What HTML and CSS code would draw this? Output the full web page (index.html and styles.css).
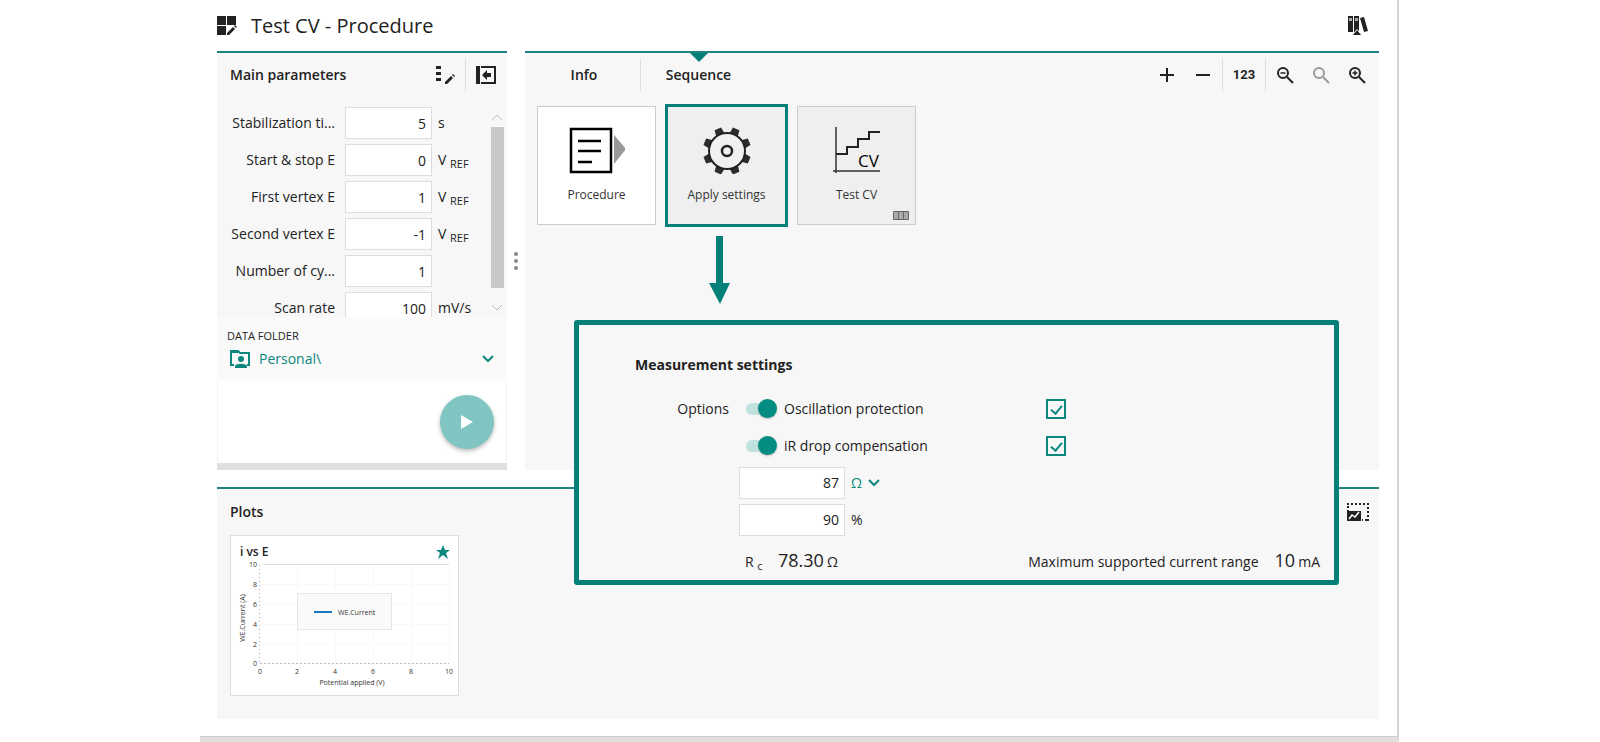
FILE: index.html
```html
<!DOCTYPE html>
<html lang="en">
<head>
 <meta charset="UTF-8">
 <meta name="viewport" content="width=device-width,initial-scale=1.0">
 <title>Test CV - Procedure</title>
 <link rel="stylesheet" href="styles.css">
</head>
<body>
<div class="app">
 <header class="app-header">
  <svg class="icon" width="20" height="20" viewBox="0 0 20 20"><path fill="#222" d="M0 0h9v9H0zM10 0h9v9h-9zM0 10h9v9H0zM10 17l6-6 2 2-6 6h-2zM17 10l1-1 2 2-1 1z"/></svg>
  <h1>Test CV - Procedure</h1>
  <button type="button" class="icon-button library" aria-label="Library">
   <svg width="20" height="20" viewBox="0 0 20 20"><path fill="#222" d="M0 0h5v16H0zM6 0h5v16H6zM12 2l4-1 4 14-4 1z"/><path fill="#aaa" d="M1 2h3v3H1zM7 2h3v3H7z"/><path fill="#222" stroke="#fff" d="M4 19.500l5-6 5 6z"/></svg>
  </button>
 </header>

 <div class="workspace">
  <section class="panel parameters">
   <div class="panel-head">
    <h2>Main parameters</h2>
    <button type="button" class="icon-button" aria-label="Edit parameters">
     <svg width="20" height="20" viewBox="0 0 20 20"><path fill="#222" d="M1 1h5v3H1zM1 7h5v3H1zM1 13h5v3H1zM10 17l6-6 2 2-6 6h-2zM17 10l1-1 2 2-1 1z"/></svg>
    </button>
    <span class="divider"></span>
    <button type="button" class="icon-button" aria-label="Collapse panel">
     <svg width="20" height="20" viewBox="0 0 20 20"><path fill="#222" d="M0 1h4v18H0zM6 10l5-5v3h4v4h-4v3z"/><path fill="none" stroke="#222" stroke-width="2" d="M5 2h14v16H5"/></svg>
    </button>
   </div>
   <div class="param-scroll">
    <div class="param-list">
     <div class="param"><label for="p1">Stabilization ti...</label><input id="p1" type="text" value="5"><span>s</span></div>
     <div class="param"><label for="p2">Start &amp; stop E</label><input id="p2" type="text" value="0"><span>V <sub>REF</sub></span></div>
     <div class="param"><label for="p3">First vertex E</label><input id="p3" type="text" value="1"><span>V <sub>REF</sub></span></div>
     <div class="param"><label for="p4">Second vertex E</label><input id="p4" type="text" value="-1"><span>V <sub>REF</sub></span></div>
     <div class="param"><label for="p5">Number of cy...</label><input id="p5" type="text" value="1"><span></span></div>
     <div class="param"><label for="p6">Scan rate</label><input id="p6" type="text" value="100"><span>mV/s</span></div>
    </div>
    <div class="scrollbar">
     <svg width="13" height="7" viewBox="0 0 13 7"><path fill="none" stroke="#bbb" d="M1 6l5-5 5 5"/></svg>
     <div class="thumb"></div>
     <svg width="13" height="7" viewBox="0 0 13 7"><path fill="none" stroke="#bbb" d="M1 1l5 5 5-5"/></svg>
    </div>
   </div>
   <div class="data-folder">
    <label for="folder">DATA FOLDER</label>
    <div class="folder-row">
     <svg width="20" height="20" viewBox="0 0 20 20"><path fill="none" stroke="#0b877d" stroke-width="2" d="M4 16H1V2h7l2 2h9v12h-2"/><path fill="#0b877d" d="M0 1h8l2 3H0zM5 19v-2c1-3 11-3 12 0v2z"/><circle cx="11" cy="10" r="3" fill="#0b877d"/></svg>
     <select id="folder"><option>Personal\</option></select>
     <svg class="chevron" width="12" height="8" viewBox="0 0 12 8"><path d="M1 1l5 5 5-5"/></svg>
    </div>
   </div>
   <div class="run">
    <button type="button" class="play" aria-label="Run">
     <svg width="12" height="14" viewBox="0 0 12 14"><path fill="#fff" d="M0 0l12 7-12 7z"/></svg>
    </button>
   </div>
  </section>

  <div class="splitter"><i></i><i></i><i></i></div>

  <section class="panel sequence">
   <div class="tabs">
    <button type="button" class="tab">Info</button>
    <span class="divider"></span>
    <button type="button" class="tab active">Sequence</button>
    <div class="tools">
     <button type="button" class="icon-button" aria-label="Add"><svg width="14" height="14" viewBox="0 0 14 14"><path stroke="#222" stroke-width="2" d="M7 0v14M0 7h14"/></svg></button>
     <button type="button" class="icon-button" aria-label="Remove"><svg width="14" height="14" viewBox="0 0 14 14"><path stroke="#222" stroke-width="2" d="M0 7h14"/></svg></button>
     <span class="divider"></span>
     <button type="button" class="icon-button numbers">123</button>
     <span class="divider"></span>
     <button type="button" class="icon-button" aria-label="Zoom out"><svg width="17" height="17" viewBox="0 0 17 17"><g fill="none" stroke="#222" stroke-width="2"><circle cx="6" cy="6" r="5"/><path d="M10 10l6 6"/><path stroke-width="1.500" d="M3.500 6h5"/></g></svg></button>
     <button type="button" class="icon-button" aria-label="Reset zoom"><svg width="17" height="17" viewBox="0 0 17 17"><g fill="none" stroke="#999" stroke-width="2"><circle cx="6" cy="6" r="5"/><path d="M10 10l6 6"/></g></svg></button>
     <button type="button" class="icon-button" aria-label="Zoom in"><svg width="17" height="17" viewBox="0 0 17 17"><g fill="none" stroke="#222" stroke-width="2"><circle cx="6" cy="6" r="5"/><path d="M10 10l6 6"/><path stroke-width="1.500" d="M3.500 6h5M6 3.500v5"/></g></svg></button>
    </div>
   </div>
   <div class="cards">
    <button type="button" class="card first">
     <svg width="56" height="48" viewBox="0 0 56 48"><rect x="2" y="3" width="40" height="43" fill="none" stroke="#000" stroke-width="2.500"/><path stroke="#000" stroke-width="2.500" d="M9 15h23M9 25h23M9 36h14"/><path fill="#999" d="M45 9l12 14-12 15z"/></svg>
     <span>Procedure</span>
    </button>
    <button type="button" class="card selected">
     <svg width="48" height="48" viewBox="-24 -25 48 48">
      <g fill="#2c2c2c">
       <g id="teeth"><path id="tooth" d="M-3.500-24h7l1 7h-9z" transform="rotate(22.500)"/><use href="#tooth" transform="rotate(45)"/></g>
       <use href="#teeth" transform="rotate(90)"/><use href="#teeth" transform="rotate(180)"/><use href="#teeth" transform="rotate(270)"/>
      </g>
      <circle r="18" fill="#f0f0f0" stroke="#222" stroke-width="2"/>
      <circle r="5" fill="none" stroke="#222" stroke-width="2.500"/>
     </svg>
     <span>Apply settings</span>
    </button>
    <button type="button" class="card">
     <svg width="48" height="48" viewBox="0 0 48 48"><path fill="none" stroke="#333" stroke-width="1.500" d="M3 1v46M0 45h47"/><path fill="none" stroke="#222" stroke-width="2" d="M3 28h11v-7h11v-8h11V6h11"/><text x="25" y="41" class="cv-text">CV</text></svg>
     <span>Test CV</span>
     <svg class="cells" width="16" height="9" viewBox="0 0 16 9"><path fill="#aaa" stroke="#666" d="M.5.5h15v8H.5zM5.500.5v8M10.500.5v8"/></svg>
    </button>
   </div>
  </section>
 </div>

 <section class="panel plots">
  <div class="plots-head">
   <h2>Plots</h2>
   <button type="button" class="icon-button" aria-label="Plot layout">
    <svg width="22" height="20" viewBox="0 0 22 20"><path fill="none" stroke="#222" stroke-width="2" stroke-dasharray="2 2" d="M0 2h22M1 4v5M21 5v14M20 18h-5"/><path fill="#222" d="M0 9h14v10H0z"/><path fill="none" stroke="#fff" stroke-width="1.500" d="M2 17l3-4 3 2 4-5"/></svg>
   </button>
  </div>
  <div class="plot">
   <div class="plot-title">
    <h3>i vs E</h3>
    <svg width="14" height="14" viewBox="0 0 14 14"><path fill="#0b877d" d="M7 0l2 5h5l-4 3 2 6-5-4-5 4 2-6-4-3h5z"/></svg>
   </div>
   <svg class="chart" viewBox="0 0 227 134">
    <path stroke="#f9f9f9" d="M66.500 4v99M104.500 4v99M142.500 4v99M180.500 4v99M218.500 4v99M29 23.500h189M29 43.500h189M29 63.500h189M29 83.500h189"/>
    <path stroke="#ddd" d="M32 3.500h186"/>
    <path stroke="#bbb" stroke-dasharray="2 2" d="M29 102.500h189"/>
    <path stroke="#aaa" stroke-dasharray="1 3" d="M28.500 4v99"/>
    <g class="y-ticks"><text x="26" y="6">10</text><text x="26" y="26">8</text><text x="26" y="46">6</text><text x="26" y="66">4</text><text x="26" y="86">2</text><text x="26" y="105">0</text></g>
    <g class="x-ticks"><text x="29" y="113">0</text><text x="66" y="113">2</text><text x="104" y="113">4</text><text x="142" y="113">6</text><text x="180" y="113">8</text><text x="218" y="113">10</text></g>
    <text class="axis" x="121" y="124">Potential applied (V)</text>
    <text class="axis" transform="translate(14 57) rotate(-90)">WE.Current (A)</text>
    <rect x="66.500" y="32.500" width="94" height="36" fill="#fafafa" stroke="#e6e6e6"/>
    <path stroke="#1a78be" stroke-width="2" d="M83 51h18"/>
    <text class="legend" x="107" y="54">WE.Current</text>
   </svg>
  </div>
 </section>

 <svg class="callout-arrow" width="22" height="68" viewBox="0 0 22 68"><path fill="#048078" d="M7 0h7v47h7L11 68 0 47h7z"/></svg>

 <section class="settings">
  <h2>Measurement settings</h2>
  <div class="option">
   <span class="option-name">Options</span>
   <input type="checkbox" class="switch" id="osc" checked>
   <label for="osc">Oscillation protection</label>
   <input type="checkbox" class="tick" aria-label="Show oscillation protection" checked>
  </div>
  <div class="option">
   <span class="option-name"></span>
   <input type="checkbox" class="switch" id="ir" checked>
   <label for="ir">iR drop compensation</label>
   <input type="checkbox" class="tick" aria-label="Show iR drop compensation" checked>
  </div>
  <div class="value-row">
   <input type="text" value="87" aria-label="Resistance">
   <select class="unit" aria-label="Unit"><option>Ω</option></select>
   <svg class="chevron" width="12" height="8" viewBox="0 0 12 8"><path d="M1 1l5 5 5-5"/></svg>
  </div>
  <div class="value-row">
   <input type="text" value="90" id="percent" aria-label="Compensation">
   <label for="percent">%</label>
  </div>
  <div class="results">
   <span class="rc">R <sub>c</sub></span>
   <span class="number">78.30</span><span>Ω</span>
   <span class="max">Maximum supported current range</span>
   <span class="number">10</span><span>mA</span>
  </div>
 </section>
</div>
</body>
</html>
```

FILE: styles.css
```css
*{
  box-sizing: border-box;
}
body{
  margin: 0;
  background: #fff;
  color: #222;
  font-family: "Open Sans", "Noto Sans", sans-serif;
  font-size: 14px;
  line-height: 20px;
}
h1, h2, h3{
  margin: 0;
}
h1{
  font-size: 20px;
  font-weight: 400;
  line-height: 28px;
}
h2{
  font-size: 14px;
  font-weight: 600;
}
h3{
  font-size: 12px;
  font-weight: 600;
}
button, input, select{
  font: inherit;
  color: inherit;
}
button, select{
  padding: 0;
  border: 0;
  background: none;
}
svg{
  display: block;
  flex: none;
}
select{
  appearance: none;
  color: #0b877d;
}
input[type=text]{
  height: 32px;
  padding: 0 5px;
  border: 1px solid #ddd;
  background: #fff;
  text-align: right;
}
sub{
  font-size: 11px;
  line-height: 0;
  vertical-align: -3px;
}
.chevron path{
  fill: none;
  stroke: #0b877d;
  stroke-width: 2;
}
.app{
  position: relative;
  min-height: 100vh;
  margin: 0 201px 0 200px;
  padding: 0 18px 17px 17px;
  border-right: 2px solid #d5d5d5;
  border-bottom: 5px solid #e0e0e0;
  box-shadow: inset 0 -1px #ccc;
}
.app-header{
  display: flex;
  align-items: center;
  gap: 14px;
  height: 51px;
  padding-right: 11px;
}
.library{
  margin-left: auto;
}
.icon-button{
  display: flex;
  align-items: center;
  justify-content: center;
}
.divider{
  width: 1px;
  height: 32px;
  background: #ddd;
}
.workspace{
  display: grid;
  grid-template-columns: 290px 18px 1fr;
}
.panel{
  border-top: 2px solid #1d857e;
  background: #f7f7f7;
}

/* left column */
.parameters{
  border-bottom: 7px solid #e0e0e0;
}
.panel-head{
  display: flex;
  align-items: center;
  gap: 10px;
  height: 44px;
  padding: 0 11px 0 13px;
}
.panel-head h2{
  flex: 1;
}
.param-scroll{
  display: flex;
  justify-content: space-between;
  height: 220px;
  padding: 10px 3px 0 0;
  overflow: hidden;
}
.param-list{
  display: grid;
  gap: 5px;
  align-content: start;
}
.param{
  display: grid;
  grid-template-columns: 128px 87px auto;
  align-items: center;
  height: 32px;
}
.param label{
  padding-right: 10px;
  text-align: right;
  white-space: nowrap;
}
.param input{
  width: 87px;
}
.param span{
  padding-left: 6px;
}
.scrollbar{
  display: flex;
  flex-direction: column;
  align-items: center;
  gap: 6px;
  width: 13px;
  padding: 7px 0 6px;
}
.scrollbar .thumb{
  flex: 1;
  width: 13px;
  margin-bottom: 10px;
  background: #c8c8c8;
}
.data-folder{
  height: 64px;
  padding: 9px 10px 0;
  background: #fafafa;
}
.data-folder label{
  display: block;
  font-size: 11px;
}
.folder-row{
  display: flex;
  align-items: center;
  gap: 9px;
  padding: 3px 3px 0;
}
.folder-row select{
  flex: 1;
}
.run{
  display: flex;
  justify-content: flex-end;
  align-items: center;
  height: 82px;
  padding-right: 12px;
  border: solid #f3f3f3;
  border-width: 0 1px;
  background: #fff;
}
.play{
  display: flex;
  align-items: center;
  justify-content: center;
  width: 54px;
  height: 54px;
  border-radius: 50%;
  background: #80c5c2;
  box-shadow: 0 2px 4px #bbb;
}
.splitter{
  display: flex;
  flex-direction: column;
  align-items: center;
  justify-content: center;
  gap: 3px;
}
.splitter i{
  width: 4px;
  height: 4px;
  border-radius: 50%;
  background: #888;
}

/* sequence */
.tabs{
  display: flex;
  align-items: center;
  height: 44px;
}
.tab{
  position: relative;
  width: 115px;
  height: 44px;
  font-weight: 600;
}
.tab.active::before{
  content: "";
  position: absolute;
  top: 0;
  left: 50%;
  margin-left: -9px;
  border: 9px solid transparent;
  border-top-color: #048078;
  border-bottom: 0;
}
.tab:first-child{
  padding-left: 3px;
}
.tools{
  display: flex;
  align-items: center;
  margin-left: auto;
  padding-right: 4px;
}
.tools .icon-button{
  width: 36px;
  height: 32px;
}
.tools .divider{
  margin: 0 1px;
}
.tools .numbers{
  width: 40px;
  font-family: Roboto, "Open Sans", sans-serif;
  font-size: 13px;
  font-weight: 700;
}
.cards{
  display: flex;
  align-items: center;
  gap: 9px;
  padding: 7px 12px;
}
.card{
  position: relative;
  display: flex;
  flex-direction: column;
  align-items: center;
  gap: 11px;
  width: 119px;
  height: 119px;
  padding-top: 19px;
  border: 1px solid #ccc;
  background: #efefef;
  color: #333;
  font-size: 12px;
}
.card.first{
  background: #fff;
}
.card.selected{
  width: 123px;
  height: 123px;
  border: 3px solid #048078;
}
.cv-text{
  font-size: 17px;
}
.cells{
  position: absolute;
  right: 6px;
  bottom: 4px;
}

/* plots */
.plots{
  height: 232px;
  margin-top: 17px;
}
.plots-head{
  display: flex;
  align-items: center;
  justify-content: space-between;
  height: 46px;
  padding: 0 10px 0 13px;
}
.plot{
  width: 229px;
  height: 161px;
  margin-left: 13px;
  border: 1px solid #ddd;
  background: #fff;
}
.plot-title{
  display: flex;
  align-items: center;
  justify-content: space-between;
  height: 25px;
  padding: 6px 8px 0 9px;
}
.chart{
  width: 227px;
  height: 134px;
  font-size: 7px;
  fill: #333;
}
.y-ticks text{
  text-anchor: end;
}
.x-ticks text, .axis{
  text-anchor: middle;
}

/* floating settings */
.callout-arrow{
  position: absolute;
  top: 236px;
  left: 509px;
}
.settings{
  position: absolute;
  top: 320px;
  left: 374px;
  right: 58px;
  height: 265px;
  padding: 25px 14px 0 56px;
  border: 5px solid #048078;
  border-radius: 3px;
  background: #f7f7f7;
}
.settings h2{
  height: 40px;
  line-height: 30px;
  font-weight: 700;
}
.option{
  display: grid;
  grid-template-columns: 94px 32px 285px 20px;
  align-items: center;
  height: 37px;
}
.option label{
  padding-left: 23px;
}
.option-name{
  text-align: right;
}
.option .switch{
  appearance: none;
  position: relative;
  width: 31px;
  height: 20px;
  margin: 0 0 0 17px;
}
.switch::before{
  content: "";
  position: absolute;
  top: 4px;
  left: 0;
  width: 28px;
  height: 12px;
  border-radius: 6px;
  background: #c0e1dd;
}
.switch::after{
  content: "";
  position: absolute;
  top: 0;
  right: 0;
  width: 19px;
  height: 19px;
  border-radius: 50%;
  background: #048c82;
  box-shadow: 0 1px 2px #bbb;
}
.tick{
  appearance: none;
  position: relative;
  width: 20px;
  height: 20px;
  margin: 0;
  border: 2px solid #0b877d;
}
.tick::after{
  content: "";
  position: absolute;
  top: 2px;
  left: 5px;
  width: 5px;
  height: 9px;
  border: solid #0b877d;
  border-width: 0 2px 2px 0;
  transform: rotate(40deg);
}
.value-row{
  display: flex;
  align-items: center;
  gap: 6px;
  height: 37px;
  padding-left: 104px;
}
.value-row input{
  width: 106px;
}
.results{
  display: flex;
  align-items: baseline;
  gap: 3px;
  padding: 12px 0 0 110px;
}
.rc{
  width: 30px;
}
.number{
  font-size: 18px;
}
.max{
  margin-left: auto;
  margin-right: 13px;
}
```
